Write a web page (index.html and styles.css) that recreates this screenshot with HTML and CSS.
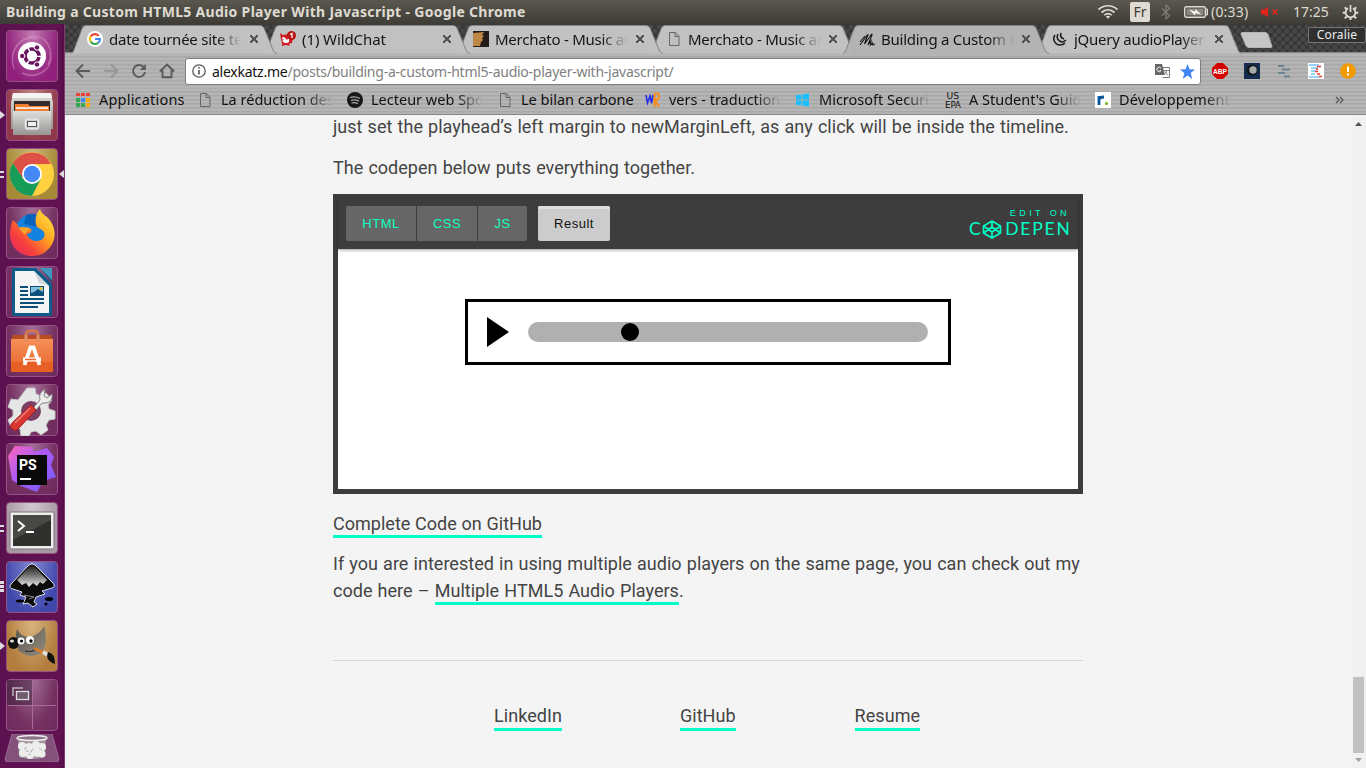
FILE: index.html
```html
<!DOCTYPE html>
<html lang="fr">
<head>
<meta charset="utf-8">
<title>Building a Custom HTML5 Audio Player With Javascript</title>
<link rel="stylesheet" href="styles.css">
</head>
<body>
<header class="menubar">
  <span class="window-title">Building a Custom HTML5 Audio Player With Javascript - Google Chrome</span>
  <svg class="wifi" width="22" height="16" viewBox="0 0 22 16" fill="none" stroke="#dfdbd2" stroke-width="1.7"><path d="M1.500 5.500C7 .5 15 .5 20.500 5.500M4.500 8.500C8.500 5 13.500 5 17.500 8.500M7.300 11.200C9.700 9.200 12.300 9.200 14.700 11.200"/><path d="M8.800 12.500Q11 11 13.200 12.500L11 14.800Z" fill="#dfdbd2" stroke="none"/></svg>
  <span class="lang">Fr</span>
  <svg class="bt" width="10" height="16" viewBox="0 0 10 16" fill="none" stroke="#7c7a72" stroke-width="1.3"><path d="M1 4.500 8.500 11.500 5 15V1L8.500 4.500 1 11.500"/></svg>
  <svg class="battery" width="24" height="12" viewBox="0 0 24 12"><rect x=".7" y=".7" width="20.600" height="10.600" rx="1.500" fill="none" stroke="#dfdbd2" stroke-width="1.400"/><path d="M22 3h1.500v6H22" fill="#8a877e" stroke="#dfdbd2"/><rect x="2.500" y="2.500" width="17" height="7" fill="#8a887f"/><path d="M5 3.500l6 2 .5-2.500 6 6-6-2-.5 2.500z" fill="#f4f2ee"/></svg>
  <span class="remaining">(0:33)</span>
  <svg class="volume" width="18" height="12" viewBox="0 0 18 12"><path d="M0 3.500h3L7 .5v11L3 8.500H0z" fill="#e2231a"/><path d="M11.500 3.500l5 5m0-5l-5 5" stroke="#e2231a" stroke-width="1.500"/></svg>
  <span class="clock">17:25</span>
  <svg class="gear" width="17" height="17" viewBox="0 0 17 17" fill="none" stroke="#dfdbd2"><path d="M6 4.300a4.900 4.900 0 1 0 5 0" stroke-width="1.800"/><path d="M8.500 1v7" stroke-width="1.700"/><path d="M8.500 13.500V16M3.300 8.800H.7m15.600 0h-2.600M4.700 12.500l-1.900 1.900m9.500-1.900 1.900 1.900M4.600 5.100 2.800 3.300m9.600 1.800 1.800-1.800" stroke-width="2"/></svg>
</header>
<div class="desktop">
<nav class="launcher">
  <svg width="0" height="0" class="defs"><defs>
    <linearGradient id="metal" x2="0" y2="1"><stop stop-color="#dededc"/><stop offset="1" stop-color="#959593"/></linearGradient>
    <linearGradient id="fox" x1="1" x2="0" y2="1"><stop stop-color="#fff44a"/><stop offset=".4" stop-color="#ffa320"/><stop offset=".7" stop-color="#f8403c"/><stop offset="1" stop-color="#e5246c"/></linearGradient>
    <linearGradient id="bag" x2="0" y2="1"><stop stop-color="#f59058"/><stop offset="1" stop-color="#e9652a"/></linearGradient>
    <linearGradient id="storm" x2="1" y2="1"><stop stop-color="#ff67bb"/><stop offset=".4" stop-color="#b15bf4"/><stop offset="1" stop-color="#6e5cff"/></linearGradient>
    <linearGradient id="peak" x2="0" y2="1"><stop stop-color="#222"/><stop offset=".4" stop-color="#666"/><stop offset="1" stop-color="#eee"/></linearGradient>
    <linearGradient id="wilber" x2="1" y2="1"><stop stop-color="#57534d"/><stop offset="1" stop-color="#958e80"/></linearGradient>
    <symbol id="tab-shape" viewBox="0 0 206 29"><path d="M0 28.500Q2 28 3 25L11 4Q12 .5 15 .5H189Q192 .5 193 3L202 25Q203 28 206 28.500"/></symbol>
    <symbol id="page" viewBox="0 0 16 16"><path d="M3.500 1.500h6l3.500 4v9H3.500zM9 1.500v4h4" fill="none" stroke="#666"/></symbol>
  </defs></svg>
  <div class="tile dash"><svg viewBox="0 0 52 52"><g fill="none" stroke="#e6a7d8" stroke-opacity=".45" stroke-width="1.400"><path d="M8 39C2 20 15 4 32 9M22 7c18-5 28 14 20 28M44 22c5 16-12 28-28 21"/></g><circle cx="26" cy="26" r="14" fill="#fff"/><circle cx="26" cy="26" r="7" fill="none" stroke="#68145c" stroke-width="3.600" stroke-dasharray="13.200 1.450" stroke-dashoffset="-1"/><g fill="#68145c" stroke="#fff" stroke-width="1"><circle cx="16.200" cy="26" r="2.700"/><circle cx="31" cy="17.500" r="2.700"/><circle cx="31" cy="34.500" r="2.700"/></g></svg></div>
  <div class="tile files"><i class="run one"></i><svg viewBox="0 0 52 52"><path d="M7 4h38l2 10v26H5V14z" fill="url(#metal)"/><path d="M7 4h38l1 5H6z" fill="#f5f5f4"/><rect x="8" y="12" width="36" height="10" fill="#352c2a"/><path d="M9 15h13l2 2h19v5H9z" fill="#ef7f32"/><path d="M10 19h32" stroke="#fff" stroke-width="1.500"/><path d="M7 22h38v24H7z" fill="url(#metal)"/><rect x="19.500" y="30" width="13" height="10" rx="2" fill="#ccc" stroke="#e5e5e5" stroke-width="1.500"/><rect x="21.500" y="32.500" width="9" height="5" fill="#eee" stroke="#555"/></svg></div>
  <div class="tile chrome"><i class="run two"></i><i class="focused"></i><svg viewBox="0 0 52 52"><circle cx="26" cy="26" r="22" fill="#ffd140"/><path d="M6.900 15A22 22 0 0 1 45.100 16H26L17.300 31z" fill="#dd5147"/><path d="M6.900 15A22 22 0 0 0 26 48L34.700 31 17.300 31z" fill="#159c58"/><circle cx="26" cy="26" r="10" fill="#fff"/><circle cx="26" cy="26" r="8.200" fill="#4587f4"/></svg></div>
  <div class="tile"><svg viewBox="0 0 52 52"><circle cx="27" cy="25" r="18" fill="#1483df"/><path d="M20 8q11-4 17 6l-5 6-14-3z" fill="#0a63bb"/><path d="M7 13l5 5 1 3c3-2 7 0 10 0 4 1 3 5-2 6 1 5 8 9 14 6 5-3 4-8 1-10l-5-3c-3-6-1-14 3-18 1 4 4 6 7 8 12 12 9 28-3 36-15 8-34 0-34-20 0-4 1-9 3-13z" fill="url(#fox)"/><path d="M13 21c3-2 8 0 11 0-1 4-5 4-5 7z" fill="#ffa529"/></svg></div>
  <div class="tile"><svg viewBox="0 0 52 52"><path d="M8 2h36q2 0 2 2v12L34 2zM6 4q0-2 2-2h22L46 18v30q0 2-2 2H8q-2 0-2-2z" fill="#0c5c88"/><path d="M34 2h12v12z" fill="#4098bf"/><path d="M9 5h19l15 15v27H9z" fill="#f5f5f5"/><path d="M28 5l15 15-10-3z" fill="#d1d8dc"/><path d="M14 21h8m-8 4h8m-8 4h8m-8 4h24m-24 4h24m-24 4h18" stroke="#0b507b" stroke-width="2"/><rect x="24" y="20" width="14" height="10" fill="#0b507b"/><path d="M25 21h12v5l-2-1-3-2-4 3-3 1z" fill="#83c2df"/><circle cx="35" cy="22.500" r="1.500" fill="#f4bd31"/></svg></div>
  <div class="tile"><svg viewBox="0 0 52 52"><path d="M20 18V10q0-4 4-4h4q4 0 4 4v8" fill="none" stroke="#ce7750" stroke-width="3"/><path d="M7 10h38l2 5H5z" fill="#b84d23"/><path d="M5 14h42v33H5z" fill="url(#bag)"/><path d="M5 37h42v10H5z" fill="#e85f25"/><path d="M20 10v7m12-7v7" stroke="#e08e68" stroke-width="3"/><path d="M18.500 40l6-17.500h3l6 17.500M17 34.500h18" fill="none" stroke="#fff" stroke-width="3.800"/><path d="M19 34.500h11" stroke="#ed682d" stroke-width="1.500"/></svg></div>
  <div class="tile"><svg viewBox="0 0 52 52"><path d="M21 4h8l1 6 5 2 5-3 6 7-4 5 1 4 6 2v8l-6 1-3 5 2 5-7 5-5-4-5 1-2 4h-8l-1-7-4-3-5 1-3-7 5-4v-6l-5-3 3-8 7 1 3-4z" fill="#e5e6e6" stroke="#c5c4c4"/><circle cx="25" cy="27" r="10" fill="#7b3e64"/><path d="M28 23l6-7q-2-7 5-11l-1 7 3 2 5-4q1 8-6 9l-4 0-6 7z" fill="#eee" stroke="#888"/><path d="M25 21l5 5-18 19q-3 3-6 0t0-6z" fill="#d8382f" stroke="#a92124"/><path d="M24 24L9 39" stroke="#ee8078" stroke-width="1.500"/></svg></div>
  <div class="tile"><svg viewBox="0 0 52 52"><path d="M9 3l17 1 2 5 13-4 7 9-3 8 5 12-13 4-6 11-16-6-9-6-4-24z" fill="url(#storm)"/><rect x="11" y="12" width="30" height="30" fill="#090909"/><text x="13" y="27" class="ps">PS</text><path d="M14 36h11" stroke="#fff" stroke-width="2"/></svg></div>
  <div class="tile terminal"><i class="run two"></i><svg viewBox="0 0 52 52"><rect x="4" y="10" width="44" height="37" rx="1" fill="#eee" stroke="#777"/><rect x="7" y="13" width="38" height="31" fill="#30302f"/><path d="M7 13h38v5L7 38z" fill="#484845"/><path d="M12 19l6 5-6 5m8 1h8" fill="none" stroke="#fff" stroke-width="2"/></svg></div>
  <div class="tile ink"><i class="run three"></i><svg viewBox="0 0 52 52"><path d="M22 5q4-4 8 0l17 17q3 4-1 5l-10 3 3 3-9 3-2 5 3 2-4 3-5-4-5 1 3-7-6-2 2-3-9-3q-5-1-2-5z" fill="#0b0b0b" stroke="#d8dce3"/><path d="M23 6q3-3 6 0l12 13-4 4-3-2-3 4-4-3-4 4-3-4-4 2-5-5z" fill="url(#peak)"/><path d="M18 34l10 2-5 2" fill="none" stroke="#888"/><ellipse cx="14" cy="40" rx="4" ry="1.500"/><ellipse cx="43" cy="38" rx="4" ry="2"/><circle cx="40" cy="43" r="1.500"/></svg></div>
  <div class="tile gimp"><i class="run one"></i><svg viewBox="0 0 52 52"><path d="M11 9q4 8 12 8Q34 15 38 6q5 19-3 27-10 7-22-2Q8 20 11 9z" fill="url(#wilber)"/><ellipse cx="7.500" cy="23" rx="5.500" ry="6" fill="#111"/><ellipse cx="6" cy="21" rx="2" ry="1.500" fill="#e3e3e3"/><circle cx="15" cy="21" r="3.500" fill="#fff"/><circle cx="24" cy="20" r="4" fill="#fff"/><circle cx="15.500" cy="21" r="1.500"/><circle cx="25" cy="21" r="1.700"/><path d="M19 31q8 2 12-3" fill="none" stroke="#222"/><path d="M28 28l10 5" stroke="#eb7d16" stroke-width="2.500"/><path d="M37 32l5 3" stroke="#ddd" stroke-width="4"/><path d="M42 32q7 1 7 12-7-2-8-8z" fill="#111"/></svg></div>
  <div class="tile workspaces"><svg viewBox="0 0 52 52"><rect x="1" y="1" width="25" height="25" fill="#3a2238" opacity=".5"/><path d="M26.500 2v48M2 26.500h48" stroke="#a96b9b"/><path d="M7 17V9h10" fill="none" stroke="#bdb2bb" stroke-width="1.500"/><rect x="10.500" y="12.500" width="12" height="8" fill="#705c6e" stroke="#ddd" stroke-width="1.300"/></svg></div>
  <svg class="trash" viewBox="0 0 56 28"><path d="M8 0h40l7 25q0 3-3 3H4q-3 0-3-3z" fill="#84517b" stroke="#9c6a91"/><path d="M14 4l1 19q13 4 26 0l1-19z" fill="#a295a0"/><ellipse cx="28" cy="4" rx="15" ry="2.500" fill="#8b7386" stroke="#eee" stroke-width="1.400"/><g fill="#eeeeec"><circle cx="18" cy="12" r="4"/><circle cx="25" cy="13" r="4"/><circle cx="32" cy="11" r="4"/><circle cx="38" cy="13" r="4"/><circle cx="19" cy="19" r="4"/><circle cx="26" cy="21" r="4"/><circle cx="33" cy="18" r="5"/><circle cx="38" cy="20" r="3.500"/></g><path d="M20 15l3-2m5 4l-2 2m9-5l3 2m-14 4l3 1" stroke="#bbb"/></svg>
</nav>
<main class="browser">
  <div class="tabs">
    <div class="tab"><svg class="shape"><use href="#tab-shape"/></svg><svg class="ico" viewBox="0 0 16 16"><circle cx="8" cy="8" r="8" fill="#fff"/><g fill="none" stroke-width="2.100"><path d="M11.700 4.900A5 5 0 0 0 3.700 5.400" stroke="#ea4335"/><path d="M3.700 5.400A5 5 0 0 0 3.700 10.600" stroke="#fbbc05"/><path d="M3.700 10.600A5 5 0 0 0 11.300 11.700" stroke="#34a853"/><path d="M11.300 11.700Q13 10.500 13 8H8" stroke="#4285f4"/></g></svg><span class="label">date tournée site te</span><b class="close"></b></div>
    <div class="tab"><svg class="shape"><use href="#tab-shape"/></svg><svg class="ico" viewBox="0 0 16 16"><path d="M0 2l3 2 5-1 5 4-1 5-3 1 1 2-4-1-4 1 0-3-1-4z" fill="#cf2029"/><path d="M2 7q2-2 3 0t4 0v4q-3 2-6 0z" fill="#fff"/><path d="M3 8v1m4-1v1" stroke="#cf2029"/><circle cx="11.500" cy="4.500" r="4.500" fill="#b81414"/><path d="M10 3.500l2-1V7" stroke="#fff" stroke-width="1.300" fill="none"/></svg><span class="label t2">(1) WildChat</span><b class="close"></b></div>
    <div class="tab"><svg class="shape"><use href="#tab-shape"/></svg><svg class="ico" viewBox="0 0 16 16"><path d="M0 0h16v16H0z" fill="#211c19"/><path d="M0 2l11-1-2 3 2 1-2 2 1 2-2 2-1 4H0z" fill="#bd8745"/></svg><span class="label">Merchato - Music an</span><b class="close"></b></div>
    <div class="tab"><svg class="shape"><use href="#tab-shape"/></svg><svg class="ico"><use href="#page"/></svg><span class="label">Merchato - Music an</span><b class="close"></b></div>
    <div class="tab active"><svg class="shape"><use href="#tab-shape"/></svg><svg class="ico" viewBox="0 0 16 16"><path d="M1 14L8 4.500Q10 2 8 6L5.500 13 12 4Q14 2 12.500 5L9 14l3-4-.5 4 2-2 .3 2L16 13M1 11l5-6" fill="none" stroke="#151515" stroke-width="1.100"/></svg><span class="label">Building a Custom H</span><b class="close"></b></div>
    <div class="tab"><svg class="shape"><use href="#tab-shape"/></svg><svg class="ico" viewBox="0 0 16 16" fill="none" stroke="#202020" stroke-width="1.600"><path d="M3 4C0 8 3 14 8 14q3 0 5-2M6 3c-2 4 0 7 4 8q2 0 4-2M9 2c-1 3 0 5 3 6"/></svg><span class="label">jQuery audioPlayer</span><b class="close"></b></div>
    <svg class="newtab" width="33" height="16" viewBox="0 0 33 16"><path d="M2 .5h23q2 0 3 2l4 12q0 1-2 1H9q-2 0-3-2L1 2Q1 .5 2 .5z" fill="#c5c5c5" stroke="#b5b5b5"/></svg>
    <span class="user">Coralie</span>
  </div>
  <div class="toolbar">
    <svg class="nav" viewBox="0 0 16 16"><path d="M15 8H2m6-6.500L1.500 8 8 14.500"/></svg>
    <svg class="nav off" viewBox="0 0 16 16"><path d="M1 8h13M8 1.500L14.500 8 8 14.500"/></svg>
    <svg class="nav" viewBox="0 0 16 16"><path d="M13 4.500A6 6 0 1 0 14 9"/><path d="M14.800 1v6h-6z" fill="#5a5a5a" stroke="none"/></svg>
    <svg class="nav" viewBox="0 0 16 16"><path d="M.8 8.500L8 1.500l7.200 7M3.500 7v7.300h9V7"/></svg>
    <div class="address">
      <svg width="14" height="14" viewBox="0 0 14 14"><circle cx="7" cy="7" r="6.200" fill="none" stroke="#555" stroke-width="1.300"/><path d="M7 6v4.500M7 3v1.500" stroke="#555" stroke-width="1.600"/></svg>
      <span class="url"><em>alexkatz.me</em>/posts/building-a-custom-html5-audio-player-with-javascript/</span>
      <svg class="translate" width="15" height="15" viewBox="0 0 15 15"><path d="M5.500 3.500h9v10h-7" fill="#fff" stroke="#777"/><path d="M0 0h7l3 11H0z" fill="#666"/><path d="M6 4.300a2.200 2.200 0 1 0 0 2.200H4.500" stroke="#fff" fill="none"/><path d="M8 6.500h6m-2 0q-1 3-3 4m1-3 3 4" stroke="#888" fill="none"/></svg>
      <svg width="15" height="15" viewBox="0 0 15 15"><path d="M7.500 0l2 5.300 5.500.2-4.300 3.500L12.200 15 7.500 11.500 2.800 15 4.300 9 0 5.500l5.500-.2z" fill="#4285f4"/></svg>
    </div>
    <div class="extensions">
      <svg viewBox="0 0 16 16"><path d="M5 0h6l5 5v6l-5 5H5l-5-5V5z" fill="#d40000"/><text x="1" y="11" class="abp" textLength="14" lengthAdjust="spacingAndGlyphs">ABP</text></svg>
      <svg viewBox="0 0 16 16"><path d="M0 0h16v16H0z" fill="#142d4f"/><circle cx="8" cy="7" r="5.500" fill="#10151c"/><circle cx="9" cy="7" r="3.700" fill="#a8aaa9"/></svg>
      <svg viewBox="0 0 16 16"><path d="M2 3h6M6 6.500h8M2 10h7M8 13.500h6" stroke="#688591" stroke-width="2"/></svg>
      <svg viewBox="0 0 16 16"><path d="M0 0h16v16H0z" fill="#fff"/><path d="M1 2h10M3 5h7M3 8h5M3 11h4M1 14h10" stroke="#75c5f3" stroke-width="1.500"/><path d="M9 3.500h4M8 6h2M7 8.500h3M9 11h3M11 13.500h3" stroke="#e43b30" stroke-width="1.600" fill="none"/></svg>
      <svg viewBox="0 0 16 16"><circle cx="8" cy="8" r="7.800" fill="#f29900"/><path d="M8 3.500V9m0 1.500v2" stroke="#fff" stroke-width="2"/></svg>
    </div>
  </div>
  <div class="bookmarks">
    <div class="bm b1"><svg viewBox="0 0 16 16"><path d="M1 1h4v3H1zm5 0h4v3H6zm5 0h4v3h-4z" fill="#ea4335"/><path d="M1 6h4v4H1zm0 5h4v4H1zm5 0h4v4H6z" fill="#34a853"/><path d="M6 6h4v4H6z" fill="#4285f4"/><path d="M11 6h4v4h-4zm0 5h4v4h-4z" fill="#f9ab00"/></svg><span>Applications</span></div>
    <div class="bm b2"><svg><use href="#page"/></svg><span class="fade">La réduction des</span></div>
    <div class="bm b3"><svg viewBox="0 0 16 16"><circle cx="8" cy="8" r="8" fill="#171717"/><path d="M3 5.500q5-1.500 10 1M4 8.300q4-1.200 8 .8M4.500 11q3.500-1 6.500.7" stroke="#aaa" stroke-width="1.300" fill="none"/></svg><span class="fade">Lecteur web Spot</span></div>
    <div class="bm b4"><svg><use href="#page"/></svg><span>Le bilan carbone</span></div>
    <div class="bm b5"><svg viewBox="0 0 16 16"><path d="M1 3l1.500 8L5 4l1.500 7L8 3" fill="none" stroke="#1b25ef" stroke-width="1.500"/><path d="M9.500 15V2q4.500-2 4.500 2t-4 4l4 7" fill="none" stroke="#ff8a0a" stroke-width="1.800"/></svg><span class="fade">vers - traduction</span></div>
    <div class="bm b6"><svg viewBox="0 0 16 16"><path d="M1 3.200l5.500-.7v5H1m6.500-5.200L14 1.500v6H7.500M1 8.500h5.500v5L1 12.800m6.500-4.300H14v6l-6.500-.8" fill="#1abfff"/></svg><span class="fade">Microsoft Securit</span></div>
    <div class="bm b7"><svg viewBox="0 0 16 16"><text x="1.500" y="7" textLength="12.500" lengthAdjust="spacingAndGlyphs">US</text><text x="0" y="15.700" textLength="16" lengthAdjust="spacingAndGlyphs">EPA</text></svg><span class="fade">A Student's Guide</span></div>
    <div class="bm b8"><svg viewBox="0 0 16 16"><path d="M0 0h16v16H0z" fill="#fff"/><path d="M4 13V4m0 4q0-3 5-3" fill="none" stroke="#07569e" stroke-width="2.800"/><circle cx="11.500" cy="11.500" r="1.700" fill="#84bd3a"/></svg><span class="fade">Développement</span></div>
    <svg class="more" width="9" height="8" viewBox="0 0 9 8"><path d="M1 1l3 3-3 3m4-6l3 3-3 3" fill="none" stroke="#555" stroke-width="1.300"/></svg>
  </div>
  <div class="viewport">
    <article>
      <p>just set the playhead’s left margin to newMarginLeft, as any click will be inside the timeline.</p>
      <p>The codepen below puts everything together.</p>
      <section class="pen">
        <div class="pen-bar">
          <div class="langs"><span class="html">HTML</span><span class="css">CSS</span><span class="js">JS</span></div>
          <span class="result">Result</span>
          <div class="brand"><small>EDIT ON</small>
            <div class="logo"><span>C</span><svg width="20" height="19" viewBox="0 0 20 19"><path d="M1.500 6L10 1l8.500 5v7L10 18l-8.500-5zM1.500 6L10 12l8.500-6M1.500 13L10 7l8.500 6M10 1v6m0 5v6" fill="none" stroke="#00ffc8" stroke-width="1.600" stroke-linejoin="round"/></svg><span class="rest">DEPEN</span></div>
          </div>
        </div>
        <div class="stage"><div class="player"><svg width="22" height="30" viewBox="0 0 22 30"><path d="M0 0l22 15L0 30z"/></svg><div class="timeline"><i class="playhead"></i></div></div></div>
      </section>
      <p class="code-link"><a>Complete Code on GitHub</a></p>
      <p>If you are interested in using multiple audio players on the same page, you can check out my code here – <a>Multiple HTML5 Audio Players</a>.</p>
      <footer><a>LinkedIn</a><a>GitHub</a><a>Resume</a></footer>
    </article>
    <div class="scroll"><svg class="up" viewBox="0 0 7 4"><path d="M0 4l3.500-4L7 4z" fill="#505050"/></svg><i class="thumb"></i><svg viewBox="0 0 7 4"><path d="M0 0h7L3.500 4z" fill="#a3a3a3"/></svg></div>
  </div>
</main>
</div>
</body>
</html>
```
FILE: styles.css
```css
* { box-sizing: border-box; }
body { margin: 0; width: 1366px; height: 768px; overflow: hidden; font-family: "Noto Sans", "Open Sans", sans-serif; background: #f4f4f4; }
svg { display: block; flex: none; }
span { white-space: nowrap; }
.menubar { height: 24px; display: flex; align-items: center; padding-left: 6px; color: #dfdbd2; font-size: 14px; background: linear-gradient(#5a584e, #3d3c37); }
.window-title { width: 1091px; font-weight: bold; font-size: 14px; letter-spacing: .31px; margin-top: -1px; }
.lang { margin: 0 11px; width: 20px; height: 20px; border-radius: 2px; background: #dfdbd2; color: #3e3d38; text-align: center; line-height: 20px; }
.battery { margin-left: 13px; }
.remaining { width: 53px; padding-left: 3px; letter-spacing: .2px; margin-top: -1px; }
.clock { width: 49px; margin-left: 14px; margin-top: -1px; }
.desktop { display: flex; height: 744px; }
.launcher { width: 65px; padding: 6px 6px 0; display: flex; flex-direction: column; gap: 7px; background: linear-gradient(90deg, #5b1150, #621252 92%, #540c47); border-right: 1px solid #7e3f70; }
.defs { position: absolute; }
.tile { position: relative; width: 52px; height: 52px; flex: none; border-radius: 4px; border: 1px solid #965284; background: radial-gradient(ellipse at 50% 0, #a5709a, #743161 65%, #6d2b5d); }
.tile > svg { width: 52px; height: 52px; margin: -1px; }
.dash { background: radial-gradient(ellipse at 50% 0, #c27cb2, #91207d 75%); }
.files { background: radial-gradient(ellipse at 50% 0, #c48684, #913848 75%); }
.chrome { background: radial-gradient(ellipse at 50% 0, #c9b67b, #a68a37 75%); }
.terminal { background: radial-gradient(ellipse at 50% 0, #d3c9d0, #a798a4 75%); }
.ink { background: radial-gradient(ellipse at 50% 0, #858bd2, #4148ac 75%); }
.gimp { background: radial-gradient(ellipse at 50% 0, #d9b680, #b27d3d 75%); }
.trash { width: 56px; height: 28px; margin: -4px 0 0 -2px; }
.ps { font: bold 14px Roboto, sans-serif; fill: #fff; }
.run { position: absolute; left: -7px; width: 4px; }
.one { top: 21px; border: 4px solid transparent; border-left: 5px solid #ddd; border-right: 0; width: 0; }
.two { top: 22px; height: 7px; border-top: 2px solid #ddd; border-bottom: 2px solid #ddd; }
.three { top: 19px; height: 12px; background: repeating-linear-gradient(#ddd 0 3px, transparent 3px 4px); }
.focused { position: absolute; right: -7px; top: 21px; border: 4px solid transparent; border-right: 5px solid #ddd; border-left: 0; }
.browser { width: 1301px; display: flex; flex-direction: column; }
.tabs { height: 29px; display: flex; padding-left: 6px; border-top: 1px solid #3a3a38; background: repeating-conic-gradient(#383838 0 25%, #484848 0 50%) 0 0 / 8px 8px; border-bottom: 1px solid #8a8a8a; }
.tab { position: relative; width: 206px; height: 29px; margin-right: -13px; display: flex; align-items: center; padding: 0 0 1px 16px; flex: none; }
.tab:nth-child(1) { z-index: 5; } .tab:nth-child(2) { z-index: 4; } .tab:nth-child(3) { z-index: 3; } .tab:nth-child(4) { z-index: 2; } .tab:nth-child(6) { z-index: 1; }
.tab.active { z-index: 6; }
.shape { position: absolute; inset: 0; width: 206px; height: 29px; z-index: -1; fill: #c1c1c1; stroke: #858585; }
.active .shape { fill: #b3b3b3; }
.ico { width: 16px; height: 16px; margin-right: 6px; }
.label { width: 134px; overflow: hidden; font-size: 15px; line-height: 22px; padding-bottom: 1px; letter-spacing: -.25px; color: #151515; -webkit-mask-image: linear-gradient(90deg, #000 80%, transparent 99%); mask-image: linear-gradient(90deg, #000 80%, transparent 99%); }
.t2 { letter-spacing: -.1px; }
.close { width: 8px; height: 8px; margin-left: 7px; background: linear-gradient(45deg, transparent 43%, #555 43% 57%, transparent 57%), linear-gradient(-45deg, transparent 43%, #555 43% 57%, transparent 57%); }
.newtab { margin: 7px 0 0 11px; }
.user { margin: 2px 0 0 35px; width: 58px; height: 16px; border: 1px solid #777; border-radius: 2px; background: #303030; color: #eee; font-size: 12px; letter-spacing: .2px; line-height: 14px; text-align: center; }
.toolbar { height: 35px; display: flex; align-items: center; padding: 1px 0 0 10px; background: repeating-linear-gradient(#aeaeae 0 1px, #b5b5b5 1px 3px, #a9a9a9 3px 4px); }
.nav { width: 16px; height: 16px; margin-right: 12px; fill: none; stroke: #5a5a5a; stroke-width: 1.9; }
.off { opacity: .3; }
.address { width: 1016px; height: 27px; margin-left: -2px; padding: 0 5px 0 6px; display: flex; align-items: center; background: #fff; border: 1px solid #7f7f7f; border-radius: 3px; }
.url { flex: 1; margin-left: 6px; font-size: 14px; letter-spacing: -.25px; color: #808080; }
.url em { font-style: normal; color: #111; }
.translate { margin-right: 10px; }
.extensions { display: flex; gap: 16px; margin-left: 11px; }
.extensions svg { width: 16px; height: 16px; }
.abp { font: bold 8px "Liberation Sans", sans-serif; fill: #fff; }
.bookmarks { height: 27px; display: flex; align-items: center; padding: 0 22px 3px 10px; background: repeating-linear-gradient(#aeaeae 0 1px, #b6b6b6 1px 3px, #a8a8a8 3px 4px); border-bottom: 1px solid #858585; }
.bm { display: flex; align-items: center; font-size: 14.5px; color: #111; flex: none; }
.bm svg { width: 16px; height: 16px; margin-right: 8px; }
.bm span { flex: 1; overflow: hidden; line-height: 23px; }
.bm text { font: 8px "DejaVu Sans", sans-serif; fill: #111; }
.fade { -webkit-mask-image: linear-gradient(90deg, #000 75%, transparent 98%); mask-image: linear-gradient(90deg, #000 75%, transparent 98%); }
.b1 { width: 122px; letter-spacing: .2px; } .b2, .b3, .b5, .b6, .b7 { width: 138px; margin-right: 12px; } .b4 { width: 148px; } .b8 { width: 138px; letter-spacing: .2px; }
.more { margin-left: auto; }
.viewport { flex: 1; display: flex; justify-content: space-between; overflow: hidden; background: #f4f4f4; min-height: 0; }
article { width: 750px; margin-left: 268px; font: 18px/27px Roboto, sans-serif; word-spacing: .65px; letter-spacing: .02px; color: #444; }
p { margin: 0 0 13px; }
p:first-child { margin: -2px 0 14px; }
.code-link { word-spacing: .2px; }
a { color: #444; padding-bottom: 1px; border-bottom: 3px solid #00ffc8; }
.pen { height: 300px; border: 5px solid #3d3d3d; background: #fff; margin-bottom: 16px; word-spacing: 0; }
.pen-bar { height: 50px; display: flex; padding: 7px 8px 0; background: #3d3d3d; box-shadow: 0 1px 3px rgba(0,0,0,.4); font: 13px/35px "Liberation Sans", sans-serif; letter-spacing: .5px; }
.langs { display: flex; gap: 1px; height: 35px; border-radius: 2px; overflow: hidden; color: #0fffc0; }
.langs span { background: #666; text-align: center; }
.html { width: 70px; } .css { width: 60px; } .js { width: 49px; }
.result { width: 72px; height: 35px; margin-left: 11px; text-align: center; color: #111; background: #ccc; border-radius: 2px; box-shadow: inset 0 3px #ddd; }
.brand { margin-left: auto; width: 102px; padding-top: 2px; color: #00ffc8; }
.brand small { display: block; font-size: 9px; line-height: 10px; letter-spacing: 3.4px; text-align: right; }
.logo { display: flex; align-items: center; font: 17.5px/20px Lato, sans-serif; height: 22px; letter-spacing: .5px; padding-left: 1px; }
.logo svg { margin: 0 3px 0 1px; }
.rest { letter-spacing: 1.8px; }
.stage { padding-top: 50px; }
.player { width: 486px; height: 66px; margin: 0 auto; padding-left: 19px; border: 3px solid #000; display: flex; align-items: center; }
.timeline { width: 400px; height: 20px; margin-left: 19px; padding: 1px 93px; border-radius: 10px; background: #b0b0b0; }
.playhead { display: block; width: 18px; height: 18px; border-radius: 50%; background: #000; }
footer { display: flex; margin-top: 56px; padding: 43px 0 0 161px; border-top: 1px solid #d8d8d8; }
footer a { line-height: 24px; height: 27px; padding: 0; margin-right: 118px; letter-spacing: .05px; }
footer a:nth-child(2) { margin-right: 119px; }
.scroll { width: 15px; background: #f1f1f1; display: flex; flex-direction: column; align-items: center; padding: 7px 0 6px; }
.scroll svg { width: 7px; height: 4px; }
.thumb { width: 11px; height: 76px; margin: auto 0 5px; background: #c1c1c1; }
```
